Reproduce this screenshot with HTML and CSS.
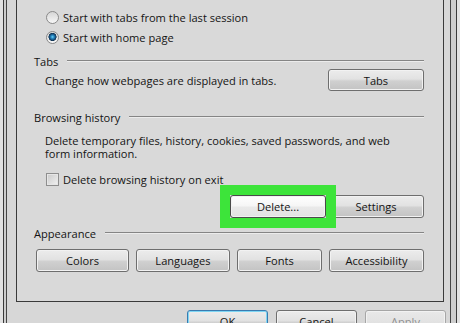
FILE: index.html
```html
<!DOCTYPE html>
<html lang="en">
<head>
  <meta charset="UTF-8">
  <meta name="viewport" content="width=device-width, initial-scale=1.0">
  <title>Internet Options</title>
  <link rel="stylesheet" href="styles.css">
</head>
<body>

  <div class="outer">
    <div class="inner">

      <!-- General tab page -->
      <div class="panel">
        <label class="opt-row"><span class="radio"></span>Start with tabs from the last session</label>
        <label class="opt-row"><span class="radio checked"></span>Start with home page</label>

        <div class="group-head">Tabs</div>
        <div class="desc-row">
          <p class="desc">Change how webpages are displayed in tabs.</p>
          <button class="btn wide">Tabs</button>
        </div>

        <div class="group-head head-history">Browsing history</div>
        <p class="desc desc-block">Delete temporary files, history, cookies, saved passwords, and web<br>form information.</p>
        <label class="opt-row check-row"><span class="checkbox"></span>Delete browsing history on exit</label>
        <div class="btn-row history-btns">
          <span class="hilite"><button class="btn wide hot">Delete...</button></span>
          <button class="btn wide">Settings</button>
        </div>

        <div class="group-head head-appearance">Appearance</div>
        <div class="btn-row look-btns">
          <button class="btn b-colors">Colors</button>
          <button class="btn b-lang">Languages</button>
          <button class="btn b-fonts">Fonts</button>
          <button class="btn b-access">Accessibility</button>
        </div>
      </div>

      <!-- dialog buttons -->
      <div class="dialog-btns">
        <button class="btn dlg default">OK</button>
        <button class="btn dlg">Cancel</button>
        <button class="btn dlg disabled">Apply</button>
      </div>

    </div>
  </div>

</body>
</html>
```

FILE: styles.css
```css
* {
  margin: 0;
  padding: 0;
  box-sizing: border-box;
}

html, body {
  height: 323px;
  overflow: hidden;
}

body {
  background: #e2e2e2;
  font-family: 'Open Sans', 'Noto Sans', sans-serif;
  font-size: 11.1px;
  color: #141414;
}

/* window frame lines */
.outer {
  margin-left: 3px;
  width: 454px;
  height: 323px;
  border-left: 1px solid #3a3a3a;
  border-right: 1px solid #3a3a3a;
  background: #cdcdcd;
}

.inner {
  margin-left: 2px;
  margin-right: 5px;
  height: 100%;
  border-left: 1px solid #454545;
  border-right: 1px solid #454545;
  background: #d7d7d7;
}

.panel {
  margin-left: 9px;
  margin-right: 6px;
  padding: 7px 19px 29px 17px;
  background: #d9d9d9;
  border: 1px solid #3a3a3a;
  border-top: none;
}

.opt-row {
  display: flex;
  align-items: center;
  height: 20px;
  padding-left: 12px;
}

.radio {
  width: 13px;
  height: 13px;
  margin-right: 4px;
  border-radius: 50%;
  border: 1px solid #8a8a8a;
  background: linear-gradient(#d6d6d6, #f7f7f7);
}

.radio.checked {
  background:
    radial-gradient(circle at 50% 45%, #6fd3f5 0, #2788c2 1.6px, #174f7c 3px, #0e2f4d 3.8px, rgba(0,0,0,0) 4.3px),
    linear-gradient(#d6d6d6, #f7f7f7);
}

.group-head {
  display: flex;
  align-items: center;
  height: 16px;
  margin-top: 6px;
  gap: 9px;
}

.group-head::after {
  content: "";
  flex: 1;
  border-top: 1px solid #858585;
  border-bottom: 1px solid #ececec;
}

.head-history {
  margin-top: 18px;
}

.head-appearance {
  margin-top: 7px;
}

.desc {
  padding-left: 11px;
}

.desc-row {
  display: flex;
  justify-content: space-between;
  align-items: center;
  height: 22px;
}

.desc-block {
  margin-top: 9px;
  line-height: 13px;
}

.check-row {
  height: 16px;
  margin-top: 11px;
}

.checkbox {
  width: 13px;
  height: 13px;
  margin-right: 4px;
  border: 1px solid #8e8e8e;
  background: linear-gradient(135deg, #c9c9c9, #f2f2f2);
  box-shadow: inset 0 0 0 1px #e6e6e6;
}

/* buttons */
.btn {
  height: 23px;
  font: inherit;
  color: #141414;
  border: 1px solid #6e6e6e;
  border-radius: 3px;
  background: linear-gradient(#ececec 0%, #e2e2e2 45%, #d0d0d0 55%, #c3c3c3 100%);
  box-shadow: inset 0 0 0 1px #f2f2f2;
}

.btn.wide {
  width: 96px;
}

.desc-row .btn {
  height: 22px;
}

.btn-row {
  display: flex;
  margin-top: 8px;
}

.history-btns {
  justify-content: flex-end;
  gap: 2px;
}

/* green highlight drawn over the neighbour button */
.hilite {
  display: flex;
  outline: 10px solid #3de43a;
  position: relative;
  z-index: 1;
}

.btn.hot {
  border-color: #4a4a4a;
  background: linear-gradient(#ffffff 0%, #f6f6f6 45%, #e9e9e9 55%, #e2e2e2 100%);
}

.look-btns {
  padding-left: 2px;
  gap: 7px;
}

.b-colors { width: 93px; }
.b-lang { width: 94px; }
.b-fonts { width: 85px; }
.b-access { width: 95px; }

.dialog-btns {
  display: flex;
  justify-content: flex-end;
  gap: 8px;
  margin-top: 8px;
  padding-right: 4px;
}

.btn.dlg {
  width: 81px;
}

.btn.default {
  border-color: #3a7bb0;
  box-shadow: inset 0 0 0 1px #7fd6f4;
}

.btn.disabled {
  color: #8e8e8e;
  border-color: #a6a6a6;
  background: linear-gradient(#e9e9e9, #dcdcdc);
}
```
